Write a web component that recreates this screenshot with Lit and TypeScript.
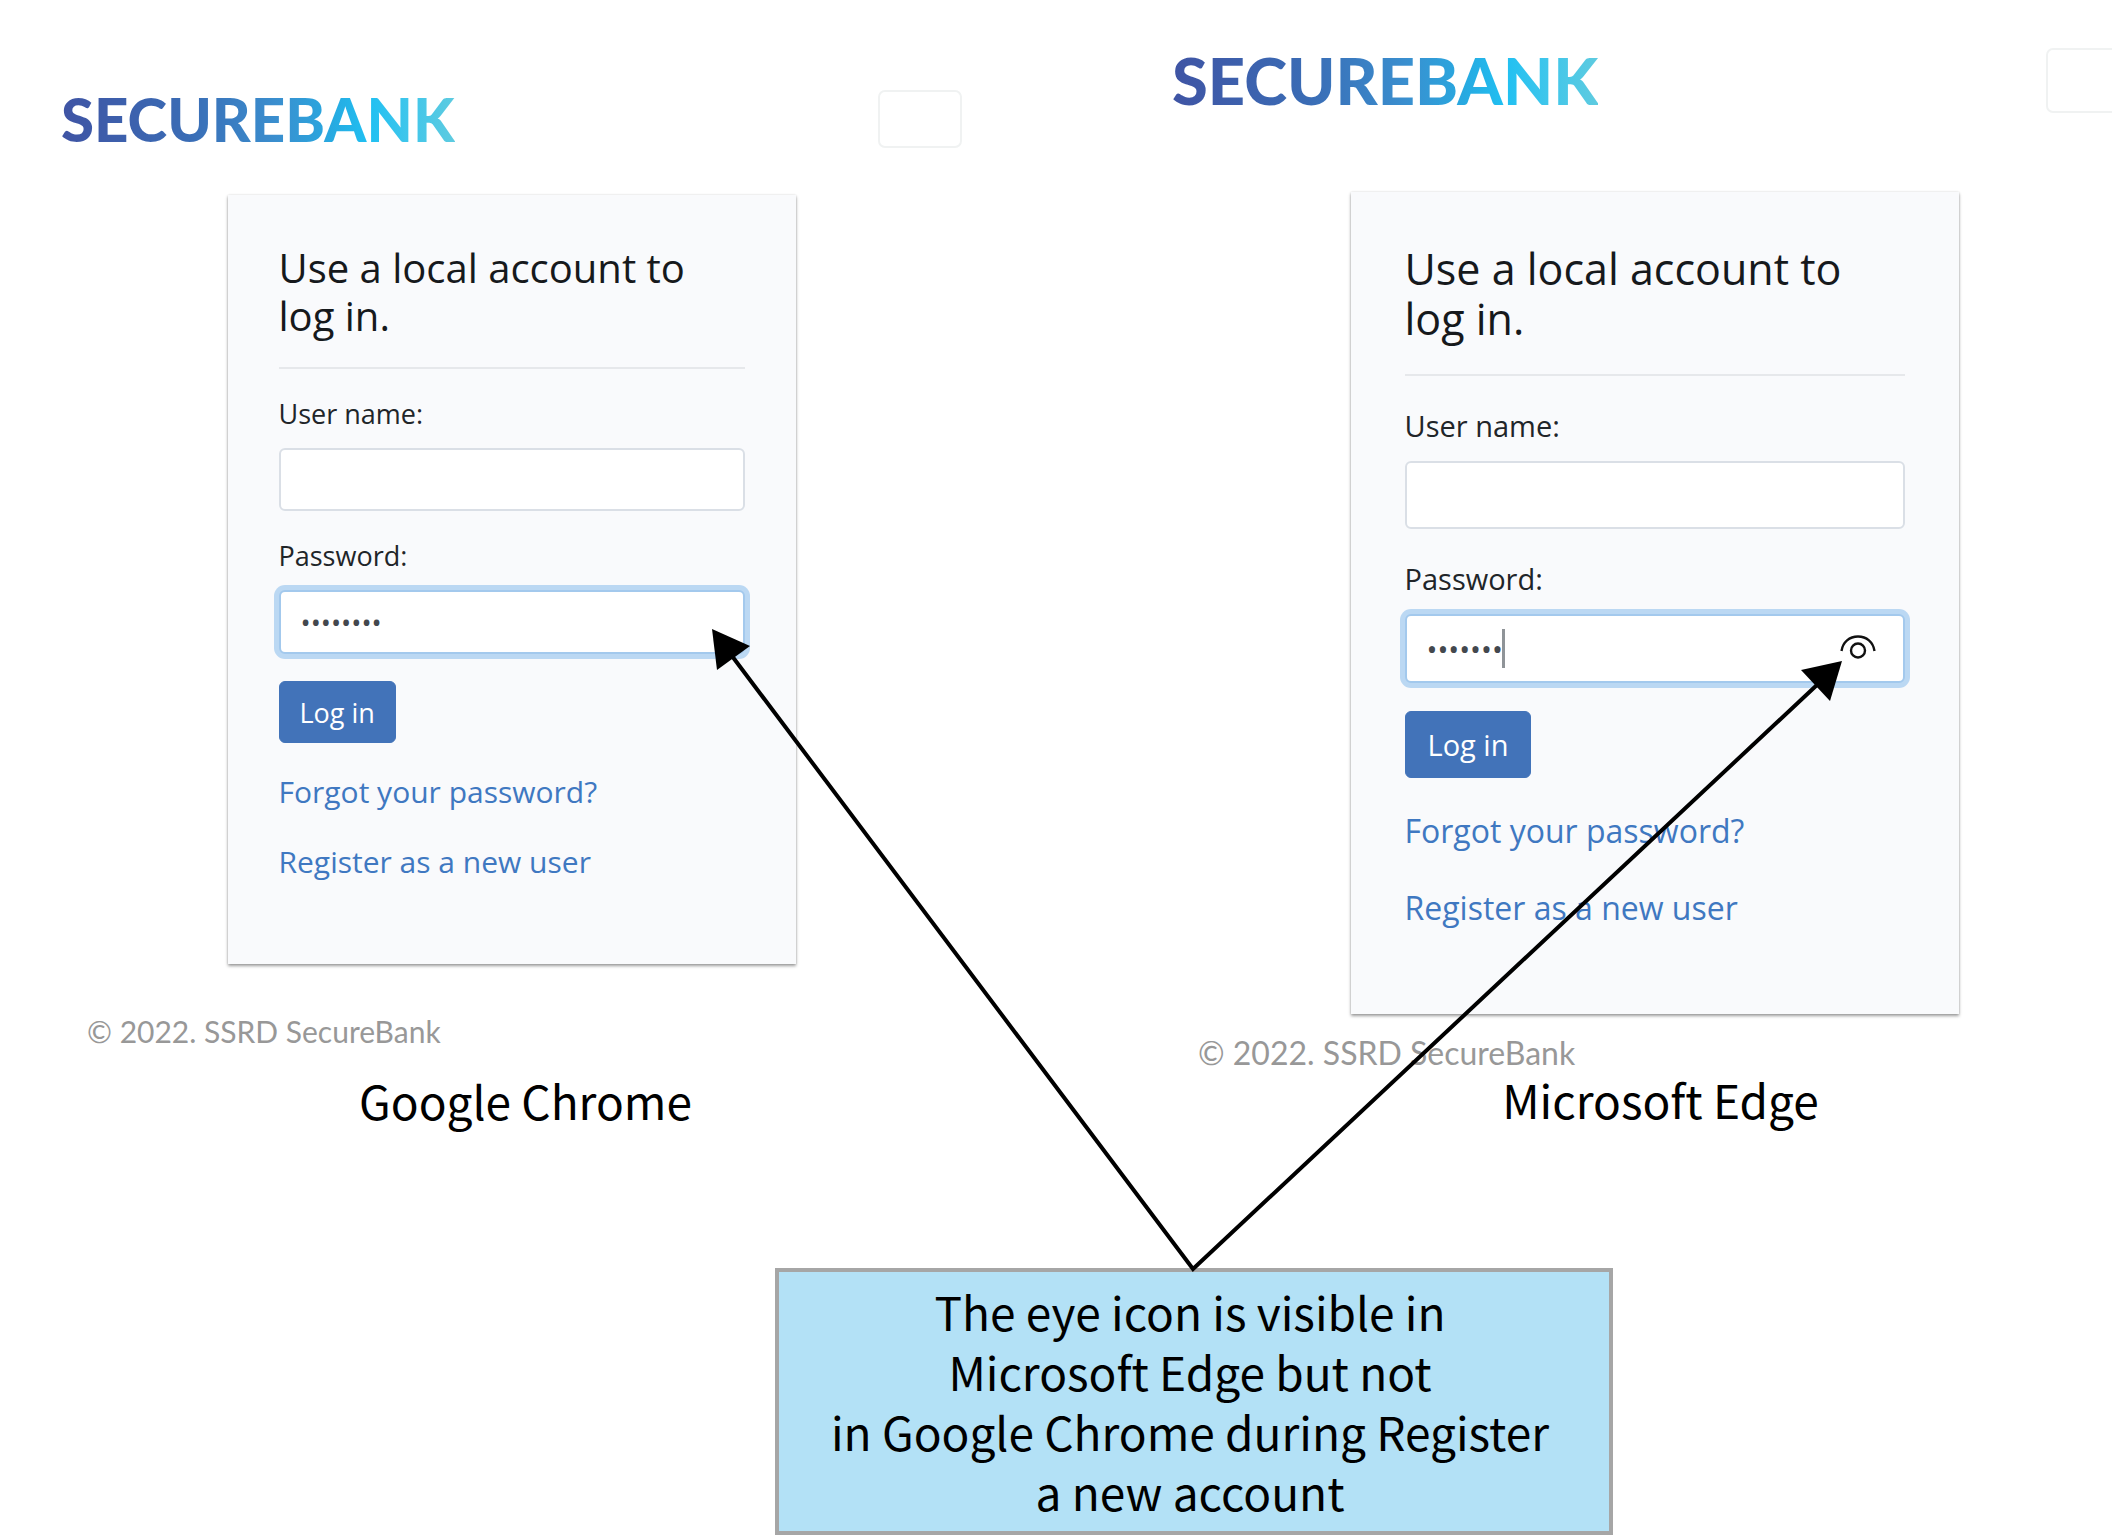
import { LitElement, html, css, nothing } from "lit";
import { customElement, property } from "lit/decorators.js";

@customElement("login-panel")
class LoginPanel extends LitElement {
  @property() browser = "";
  @property() password = "";
  @property({ type: Boolean }) reveal = false;

  static styles = css`
    :host {
      display: flex;
      flex-direction: column;
      min-width: 0;
      box-sizing: border-box;
      padding: var(--top) var(--edge-end) 0 var(--edge-start);
      font-family: "Open Sans", "Noto Sans", sans-serif;
      color: #212529;
    }
    .bar {
      display: flex;
      justify-content: space-between;
      align-items: center;
      height: var(--bar);
      margin-bottom: var(--bar-gap);
    }
    .brand {
      font: 900 var(--brand-size) / var(--bar) Lato, "Open Sans", sans-serif;
      color: transparent;
      text-decoration: none;
      background: linear-gradient(90deg, #3f54a4 0%, #3a6cb5 32%, #3a8fcf 55%, #27aae1 69%, #20c0f2 78%, #3fc6eb 88%, #5ecbe0 100%);
      -webkit-background-clip: text;
      background-clip: text;
    }
    .toggler {
      width: var(--toggler);
      height: 100%;
      flex: none;
      background: #fff;
      border: 2px solid #f0f2f2;
      border-radius: 7px;
    }
    .card {
      align-self: center;
      box-sizing: border-box;
      width: var(--card);
      padding: var(--card-top) var(--card-side) var(--card-bottom);
      background: #f9fafc;
      box-shadow: 0 2px 3px rgba(0, 0, 0, 0.38), 0 0 2px rgba(0, 0, 0, 0.12);
    }
    h2 {
      margin: 0 0 var(--rule-gap);
      font-size: var(--title-size);
      line-height: var(--title-line);
      font-weight: 400;
      color: #16191c;
    }
    hr {
      height: 2px;
      margin: 0 0 var(--field-gap);
      border: 0;
      background: #e6e8eb;
    }
    label {
      display: block;
      margin-bottom: 18px;
      font-size: var(--label-size);
      line-height: var(--label-line);
    }
    .field {
      position: relative;
      margin-bottom: var(--field-gap);
    }
    .last {
      margin-bottom: var(--submit-gap);
    }
    input {
      display: block;
      box-sizing: border-box;
      width: 100%;
      height: var(--control);
      padding: 0 20px;
      font: var(--label-size) "Open Sans", sans-serif;
      color: #43484e;
      background: #fff;
      border: 2px solid #dadfe6;
      border-radius: 6px;
      outline: none;
    }
    .active {
      height: calc(var(--control) + 1px);
      border-color: #a3c9ed;
      box-shadow: 0 0 0 5px #bbd8f3;
    }
    .caret {
      position: absolute;
      left: 97px;
      top: 15px;
      width: 3px;
      height: 39px;
      background: #8f9498;
    }
    .eye {
      position: absolute;
      right: 27px;
      top: 15px;
      width: 40px;
      height: 40px;
      padding: 0;
      border: 0;
      background: none;
    }
    .eye svg {
      display: block;
    }
    .submit {
      display: block;
      height: var(--button);
      padding: 0 var(--button-side);
      font: var(--label-size) "Open Sans", sans-serif;
      color: #fff;
      background: #4273b9;
      border: 1px solid #4273b9;
      border-radius: 6px;
    }
    .links {
      display: flex;
      flex-direction: column;
      align-items: flex-start;
      gap: var(--link-gap);
      margin-top: var(--link-top);
    }
    .links a {
      font-size: var(--link-size);
      line-height: var(--link-line);
      color: #3f78c1;
      text-decoration: none;
    }
    .copyright {
      margin: var(--foot-gap) 0 var(--caption-gap) 26px;
      font: var(--link-size) / 32px Lato, "Open Sans", sans-serif;
      color: #989898;
    }
    .caption {
      margin: 0;
      padding-left: var(--caption-shift);
      text-align: center;
      font: 46px / 60px "Noto Sans CJK SC", "Open Sans", sans-serif;
      color: #000;
    }
  `;

  render() {
    return html`
      <header class="bar">
        <a class="brand" href="#">SECUREBANK</a>
        <button class="toggler" type="button" aria-label="Menu"></button>
      </header>
      <form class="card" @submit=${(e: Event) => e.preventDefault()}>
        <h2>Use a local account to log in.</h2>
        <hr />
        <label for="user">User name:</label>
        <div class="field"><input id="user" type="text" autocomplete="off" /></div>
        <label for="pass">Password:</label>
        <div class="field last">
          <input id="pass" class="active" type="password" autocomplete="off" .value=${this.password} />
          ${this.reveal
            ? html`<span class="caret"></span>
                <button class="eye" type="button" aria-label="Show password">
                  <svg width="40" height="40" viewBox="0 0 40 40" fill="none" stroke="#111" stroke-width="2.4">
                    <path d="M3.5 22C4.8 13 11.5 7.5 20 7.5S35.2 13 36.5 22" />
                    <circle cx="20" cy="21.5" r="7" />
                  </svg>
                </button>`
            : nothing}
        </div>
        <button class="submit" type="submit">Log in</button>
        <nav class="links">
          <a href="#">Forgot your password?</a>
          <a href="#">Register as a new user</a>
        </nav>
      </form>
      <footer class="copyright">© 2022. SSRD SecureBank</footer>
      <p class="caption">${this.browser}</p>
    `;
  }
}

@customElement("app-root")
class AppRoot extends LitElement {
  static styles = css`
    :host {
      display: block;
      position: relative;
      overflow: hidden;
      background: #fff;
    }
    .panels {
      display: grid;
      grid-template-columns: 32fr 34fr;
    }
    .chrome {
      --top: 90px;
      --edge-start: 61px;
      --edge-end: 62px;
      --bar: 58px;
      --bar-gap: 47px;
      --brand-size: 60px;
      --toggler: 84px;
      --card: 568px;
      --card-top: 49px;
      --card-side: 51px;
      --card-bottom: 84px;
      --title-size: 40px;
      --title-line: 48px;
      --rule-gap: 27px;
      --field-gap: 29px;
      --submit-gap: 27px;
      --label-size: 27px;
      --label-line: 32px;
      --control: 63px;
      --button: 62px;
      --button-side: 20px;
      --link-size: 30px;
      --link-line: 36px;
      --link-top: 31px;
      --link-gap: 34px;
      --foot-gap: 51px;
      --caption-gap: 23px;
      --caption-shift: 28px;
    }
    .edge {
      --top: 48px;
      --edge-start: 148px;
      --edge-end: 0px;
      --bar: 65px;
      --bar-gap: 79px;
      --brand-size: 65px;
      --toggler: 91px;
      --card: 608px;
      --card-top: 52px;
      --card-side: 54px;
      --card-bottom: 87px;
      --title-size: 43px;
      --title-line: 50px;
      --rule-gap: 30px;
      --field-gap: 33px;
      --submit-gap: 28px;
      --label-size: 29px;
      --label-line: 34px;
      --control: 68px;
      --button: 67px;
      --button-side: 22px;
      --link-size: 32px;
      --link-line: 38px;
      --link-top: 34px;
      --link-gap: 39px;
      --foot-gap: 23px;
      --caption-gap: 0px;
      --caption-shift: 12px;
      margin-right: -25px;
    }
    .notes {
      display: grid;
      grid-template-columns: 775fr 838fr 499fr;
      margin-top: 138px;
    }
    .callout {
      grid-column: 2;
      margin: 0;
      padding: 9px 8px 10px 0;
      text-align: center;
      font: 46px / 60px "Noto Sans CJK SC", "Open Sans", sans-serif;
      color: #000;
      background: #b3e1f6;
      border: 4px solid #a6a6a6;
      white-space: nowrap;
    }
    .arrows {
      position: absolute;
      inset: 0;
      width: 100%;
      height: 100%;
      pointer-events: none;
    }
  `;

  render() {
    return html`
      <main class="panels">
        <login-panel class="chrome" browser="Google Chrome" password="password"></login-panel>
        <login-panel class="edge" browser="Microsoft Edge" password="secure1" reveal></login-panel>
      </main>
      <section class="notes">
        <p class="callout">
          The eye icon is visible in<br />Microsoft Edge but not<br />in Google Chrome during Register<br />a new account
        </p>
      </section>
      <svg class="arrows" viewBox="0 0 2112 1535" preserveAspectRatio="none" aria-hidden="true">
        <path d="M732 656L1193 1269L1818 684" fill="none" stroke="#000" stroke-width="4" />
        <path d="M712 629L750 646L717 670Z" />
        <path d="M1842 661L1801 670L1830 701Z" />
      </svg>
    `;
  }
}
